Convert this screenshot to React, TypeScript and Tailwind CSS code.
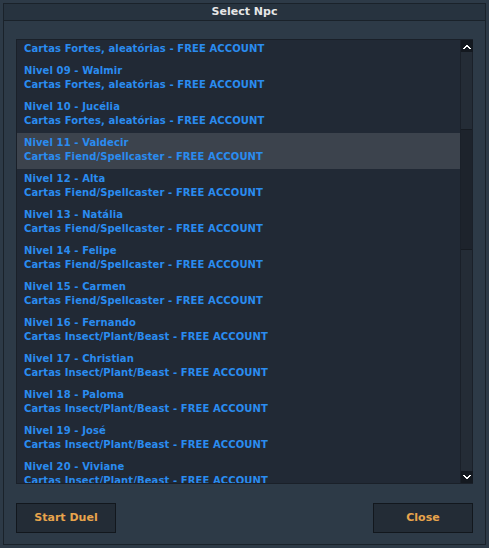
import React from "react";

const npcs = [
  { name: "Nivel 08 - Lucas", deck: "Cartas Fortes, aleatórias - FREE ACCOUNT" },
  { name: "Nivel 09 - Walmir", deck: "Cartas Fortes, aleatórias - FREE ACCOUNT" },
  { name: "Nivel 10 - Jucélia", deck: "Cartas Fortes, aleatórias - FREE ACCOUNT" },
  { name: "Nivel 11 - Valdecir", deck: "Cartas Fiend/Spellcaster - FREE ACCOUNT" },
  { name: "Nivel 12 - Alta", deck: "Cartas Fiend/Spellcaster - FREE ACCOUNT" },
  { name: "Nivel 13 - Natália", deck: "Cartas Fiend/Spellcaster - FREE ACCOUNT" },
  { name: "Nivel 14 - Felipe", deck: "Cartas Fiend/Spellcaster - FREE ACCOUNT" },
  { name: "Nivel 15 - Carmen", deck: "Cartas Fiend/Spellcaster - FREE ACCOUNT" },
  { name: "Nivel 16 - Fernando", deck: "Cartas Insect/Plant/Beast - FREE ACCOUNT" },
  { name: "Nivel 17 - Christian", deck: "Cartas Insect/Plant/Beast - FREE ACCOUNT" },
  { name: "Nivel 18 - Paloma", deck: "Cartas Insect/Plant/Beast - FREE ACCOUNT" },
  { name: "Nivel 19 - José", deck: "Cartas Insect/Plant/Beast - FREE ACCOUNT" },
  { name: "Nivel 20 - Viviane", deck: "Cartas Insect/Plant/Beast - FREE ACCOUNT" },
];

function Arrow({ up }: { up?: boolean }) {
  return (
    <div className="w-[12px] h-[12px] bg-[#141920] flex items-center justify-center">
      <svg width="8" height="5" viewBox="0 0 8 5" className={up ? "" : "rotate-180"}>
        <path d="M0 4h1V3h1V2h1V1h2v1h1v1h1v1h1v1H6V4H5V3H3v1H2v1H0z" fill="#fff" />
      </svg>
    </div>
  );
}

export default function App() {
  return (
    <div
      className="w-[489px] h-[548px] bg-[#2d3a47] p-[3px] select-none"
      style={{ fontFamily: '"DejaVu Sans", Verdana, sans-serif' }}
    >
      <div className="h-full border border-[#1a222a] flex flex-col">
        {/* title */}
        <div className="h-[17px] pt-[1px] bg-[#27333f] border-b border-[#1a222a] flex items-center justify-center text-[11px] font-bold text-[#e6e6e6]">
          Select Npc
        </div>

        <div className="flex-1 flex flex-col px-[12px] pt-[18px]">
          {/* list */}
          <div className="h-[445px] flex bg-[#212935] border border-[#1a2029]">
            <div className="flex-1 overflow-hidden">
              <div className="-mt-[15px]">
                {npcs.map((n, i) => (
                  <div
                    key={i}
                    className={`h-[36px] px-[7px] pt-[3px] text-[10px] font-bold tracking-[0.1px] leading-[14px] text-[#2a8cf0] ${
                      i === 3 ? "bg-[#3c434d]" : ""
                    }`}
                  >
                    <div>{n.name}</div>
                    <div>{n.deck}</div>
                  </div>
                ))}
              </div>
            </div>
            {/* scrollbar */}
            <div className="w-[12px] flex flex-col bg-[#242c36] border-l border-[#1a2029]">
              <Arrow up />
              <div className="flex-1 relative">
                <div className="absolute left-0 right-0 top-[77px] h-[121px] bg-[#1d232c] border-y border-[#161b22]" />
              </div>
              <Arrow />
            </div>
          </div>

          {/* buttons */}
          <div className="flex justify-between mt-[19px]">
            <button className="w-[100px] h-[30px] bg-[#232c36] border border-[#12171d] text-[11px] font-bold text-[#e8a44c]">
              Start Duel
            </button>
            <button className="w-[100px] h-[30px] bg-[#232c36] border border-[#12171d] text-[11px] font-bold text-[#e8a44c]">
              Close
            </button>
          </div>
        </div>
      </div>
    </div>
  );
}
